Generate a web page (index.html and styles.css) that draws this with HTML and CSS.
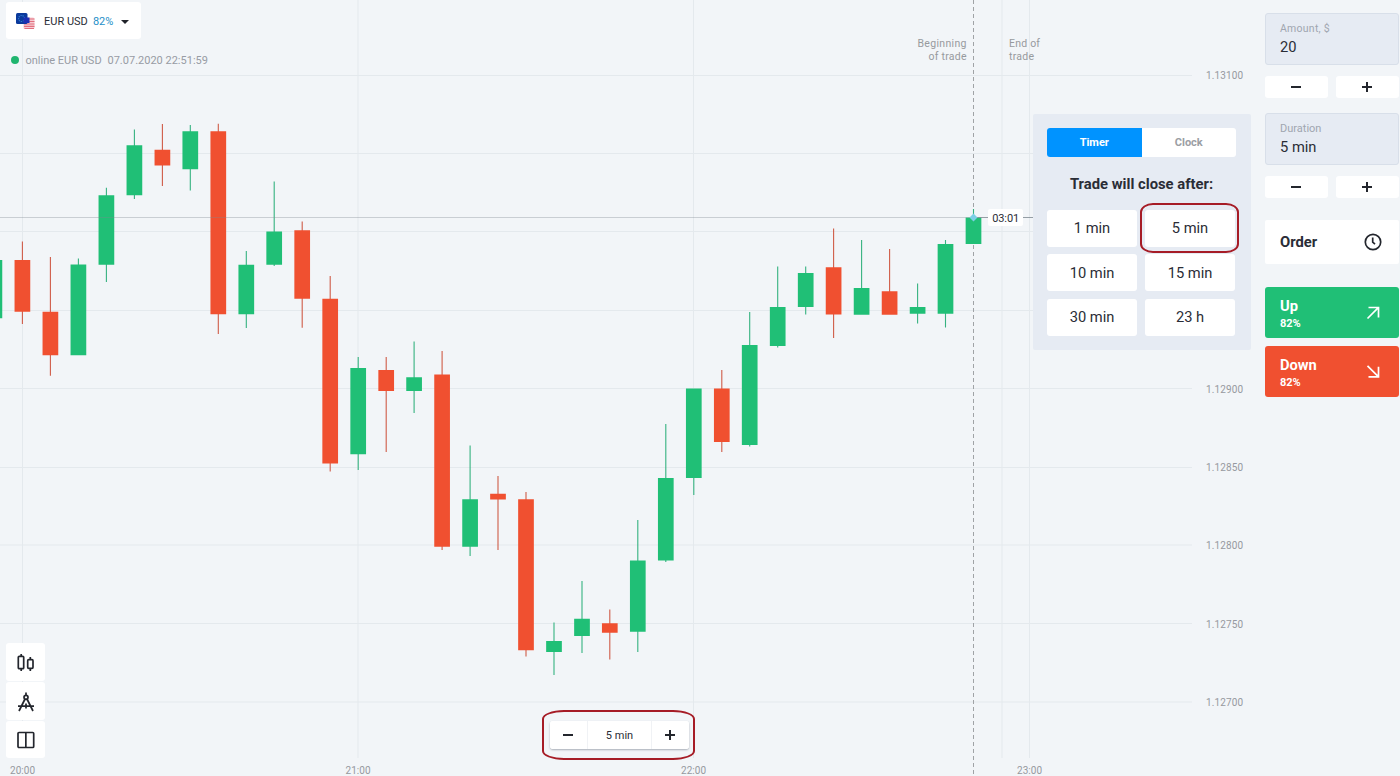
FILE: index.html
```html
<!DOCTYPE html>
<html lang="en">
<head>
<meta charset="utf-8">
<title>EUR USD</title>
<link rel="stylesheet" href="styles.css">
</head>
<body>
<div class="app">
  <main class="stage">
    <svg class="chart" viewBox="0 0 1251 776" width="1251" height="776">
      <g class="grid">
        <path d="M0 75.5H1192M0 153.5H1192M0 231.5H1192M0 310.5H1192M0 388.5H1192M0 467.5H1192M0 545H1192M0 623.5H1192M0 702H1192"/>
        <path d="M22.5 0V758M358 0V758M693.5 0V758M1002 0V758M1029.5 0V758"/>
      </g>
      <path class="begin-line" d="M973.5 0V776"/>
      <g class="up">
        <path class="wick" d="M78.4 258.5V265M106.4 187.7V282M134.4 129.5V199M190.3 125V190.5M246.3 251V328M274.2 181.5V266M358.2 357V470M414.1 341.5V413M470.1 445.5V556M554 622.5V675M582 581V653M637.8 520V652M665.8 424V562M693.8 470V495M749.7 312V446.5M777.7 266.5V347.5M805.7 266.5V314.5M861.6 240V290M917.6 283.5V323.5M945.5 240V327.5M973.5 209V220"/>
        <path class="body" d="M-5.6 260V318.3M78.4 264.5V355.3M106.4 195.3V264.7M134.4 145.2V195.3M190.3 131.3V169.3M246.3 264.7V314.3M274.2 231.5V264.7M358.2 368V454.3M414.1 377.3V391M470.1 499.3V546.7M554 641V652M582 618.7V636M637.8 560.5V631.7M665.8 478V560.5M693.8 388.5V478M749.7 345V445M777.7 307V346M805.7 273V307M861.6 288V314.7M917.6 307V313.7M945.5 244V313.7M973.5 217.5V244"/>
      </g>
      <g class="down">
        <path class="wick" d="M22.4 241.5V324M50.4 257V375.7M162.4 124V186M218.3 123.7V334M302.2 221.5V327.7M330.2 276V471.5M386.2 357V452M442.1 351V550M498 476V550M526 492V656.5M609.8 609.5V659.5M721.8 370V452M833.6 228.5V338M889.6 249V292"/>
        <path class="body" d="M22.4 260V311.7M50.4 311.7V355.3M162.4 149.8V165.5M218.3 131.3V314.3M302.2 230.3V298.7M330.2 298.7V463.5M386.2 370V391M442.1 374.5V546.7M498 493.7V499.5M526 499.3V650.3M609.8 623.3V632.7M721.8 388.5V442M833.6 267.3V314.5M889.6 291.3V314.7"/>
      </g>
      <path class="price-line" d="M0 217.5H973"/>
      <path class="price-line strong" d="M973 217.5H1033"/>
      <path class="marker" d="M973.5 213.5L977.5 217.5L973.5 221.5L969.5 217.5Z"/>
      <rect class="countdown" x="988" y="209" width="35" height="17" rx="2"/>
      <text class="countdown-text" x="1005.7" y="222" text-anchor="middle" textLength="27">03:01</text>
      <g class="label">
        <text x="966.5" y="47" text-anchor="end" textLength="49">Beginning</text>
        <text x="966.5" y="59.5" text-anchor="end" textLength="38">of trade</text>
        <text x="1009" y="47" textLength="31">End of</text>
        <text x="1009" y="59.5" textLength="25">trade</text>
      </g>
      <g class="axis">
        <text x="1206" y="79" textLength="37">1.13100</text>
        <text x="1206" y="392.5" textLength="37">1.12900</text>
        <text x="1206" y="471" textLength="37">1.12850</text>
        <text x="1206" y="549" textLength="37">1.12800</text>
        <text x="1206" y="627.5" textLength="37">1.12750</text>
        <text x="1206" y="706" textLength="37">1.12700</text>
        <g text-anchor="middle">
          <text x="22.5" y="774" textLength="25">20:00</text>
          <text x="358" y="774" textLength="25">21:00</text>
          <text x="693.5" y="774" textLength="25">22:00</text>
          <text x="1029.5" y="774" textLength="25">23:00</text>
        </g>
      </g>
    </svg>

    <header class="asset-panel">
      <div class="asset">
        <svg class="flags" width="20" height="18" viewBox="0 0 20 18">
          <rect x="7.500" y="4.500" width="11" height="11.500" rx="1.500" fill="#f6ccd3"/>
          <path d="M12 6H18.500M12 8.500H18.500M8 11H18.500M8 13.300H18.500M8.500 15.500H18" stroke="#e2707f" stroke-width="1.200"/>
          <rect x="0" y="0" width="11.500" height="11" rx="1.500" fill="#0b3a9c"/>
          <circle cx="5.600" cy="5.500" r="3" fill="none" stroke="#3079d0" stroke-width="1.100" stroke-dasharray="1.300 .8"/>
          <rect x="7.500" y="4.500" width="6" height="5.500" fill="#1c2fb4"/>
        </svg>
        <span class="pair">EUR USD</span>
        <span class="payout">82%</span>
        <i class="caret"></i>
      </div>
      <div class="status"><i class="dot"></i><span class="online">online EUR USD</span><span class="stamp">07.07.2020 22:51:59</span></div>
    </header>

    <nav class="tools">
      <button class="tool"><svg width="20" height="20" viewBox="0 0 20 20"><path d="M5.200 1V3.500M5.200 15.500V18M14.300 4V7M14.300 15V18"/><rect x="2.300" y="3.300" width="5.400" height="12.400" rx="1"/><rect x="11.700" y="6.700" width="5.300" height="8.600" rx="1"/></svg></button>
      <button class="tool"><svg width="20" height="20" viewBox="0 0 20 20"><path d="M10 .5V3.500M9 7L3 19M11 7L17 19M2 14.200H18M10 11.500V16.500"/><circle cx="10" cy="5.300" r="2"/></svg></button>
      <button class="tool"><svg width="20" height="20" viewBox="0 0 20 20"><rect x="2" y="2.500" width="15.700" height="15" rx="1"/><path d="M9.850 2.500V17.500"/></svg></button>
    </nav>

    <div class="interval">
      <button class="step"><i class="minus"></i></button>
      <span class="interval-value">5 min</span>
      <button class="step"><i class="plus"></i></button>
      <i class="ring ring-interval"></i>
    </div>

    <section class="popup">
      <div class="tabs"><span class="tab active">Timer</span><span class="tab">Clock</span></div>
      <h2 class="popup-title">Trade will close after:</h2>
      <div class="times">
        <button class="time">1 min</button>
        <button class="time">5 min<i class="ring ring-time"></i></button>
        <button class="time">10 min</button>
        <button class="time">15 min</button>
        <button class="time">30 min</button>
        <button class="time">23 h</button>
      </div>
    </section>
  </main>

  <aside class="sidebar">
    <div class="field"><span class="field-label">Amount, $</span><span class="field-value">20</span></div>
    <div class="steppers"><button class="stepper"><i class="minus"></i></button><button class="stepper"><i class="plus"></i></button></div>
    <div class="field"><span class="field-label duration">Duration</span><span class="field-value">5 min</span></div>
    <div class="steppers"><button class="stepper"><i class="minus"></i></button><button class="stepper"><i class="plus"></i></button></div>
    <button class="order"><span>Order</span><svg width="18" height="18" viewBox="0 0 18 18"><circle cx="9" cy="9" r="7.700"/><path d="M8.700 4.500V9.200L11 11.200"/></svg></button>
    <button class="trade buy"><span class="trade-text"><b>Up</b><small>82%</small></span><svg width="14" height="14" viewBox="0 0 14 14"><path d="M1.500 12.500L12.300 1.700M2.500 1.500H12.500V11.500"/></svg></button>
    <button class="trade sell"><span class="trade-text"><b>Down</b><small>82%</small></span><svg width="14" height="14" viewBox="0 0 14 14"><path d="M1.500 .8L12.300 11.600M2.500 11.800H12.500V1.800"/></svg></button>
  </aside>
</div>
</body>
</html>
```

FILE: styles.css
```css
* { box-sizing: border-box; }
body { margin: 0; background: #f2f5f8; color: #2a2d36; font-family: Roboto, sans-serif; overflow: hidden; }
button { border: 0; padding: 0; margin: 0; font: inherit; color: inherit; background: #fff; display: flex; align-items: center; justify-content: center; }
.app { display: grid; grid-template-columns: 1251px 149px; width: 1400px; height: 776px; }
.stage { position: relative; }

/* chart */
.chart { display: block; }
.grid { fill: none; stroke: #e4e9ed; stroke-width: 1; }
.begin-line { stroke: #a0a3a6; stroke-width: 1; stroke-dasharray: 4 3; }
.up { stroke: #20bf76; }
.down { stroke: #f05030; }
.wick { stroke-width: 1.1; }
.up .wick { stroke: #36b280; }
.down .wick { stroke: #cf5c48; }
.body { stroke-width: 15.7; }
.price-line { stroke: #7d8890; stroke-opacity: .35; }
.price-line.strong { stroke-opacity: .8; }
.marker { fill: #7ccfe6; }
.countdown { fill: #fff; }
.countdown-text { font-size: 11px; fill: #2a2d36; }
.label { font-size: 10.5px; fill: #979a9e; }
.axis { font-size: 10px; fill: #96999f; }

/* asset selector */
.asset-panel { position: absolute; left: 6px; top: 2px; }
.asset { display: flex; align-items: center; width: 135px; height: 37px; padding: 2px 0 0 10px; border-radius: 3px; background: #fff; font-size: 11px; }
.flags { margin-right: 8px; }
.pair { width: 44px; margin-right: 5px; white-space: nowrap; letter-spacing: 0; }
.payout { width: 21px; margin-right: 7px; color: #1e8fc8; letter-spacing: -.1px; }
.caret { border: 4.5px solid transparent; border-top-color: #20232a; border-bottom: 0; }
.status { display: flex; align-items: center; height: 14px; margin-top: 14px; padding-left: 4.5px; font-size: 11px; color: #989ca4; white-space: nowrap; }
.dot { width: 8px; height: 8px; margin-right: 7px; border-radius: 50%; background: #20b56f; }
.online { width: 77px; margin-right: 5px; }
.stamp { letter-spacing: 0; }

/* drawing tools */
.tools { position: absolute; left: 6px; top: 643px; display: flex; flex-direction: column; gap: 1px; }
.tool { width: 39px; height: 38px; padding-top: 2px; border-radius: 3px; }
.tool:last-child { height: 37px; padding-top: 1px; }
.tool svg { fill: none; stroke: #23262d; stroke-width: 1.7; }

/* step glyphs */
.minus, .plus { position: relative; display: block; width: 10px; height: 10px; margin-right: 1px; }
.minus::before, .plus::before { content: ""; position: absolute; left: 0; top: 4px; width: 10px; height: 2px; background: #23262d; }
.plus::after { content: ""; position: absolute; left: 4px; top: 0; width: 2px; height: 10px; background: #23262d; }

/* candle interval */
.interval { position: absolute; left: 550px; top: 721px; display: flex; width: 139px; height: 28px; border-radius: 3px; background: #fff; box-shadow: 0 1px 2px rgba(30, 40, 60, .35); }
.step { width: 37px; border-radius: 3px; }
.interval-value { flex: 1; display: flex; align-items: center; justify-content: center; border: solid #f0f2f5; border-width: 0 1px; font-size: 11px; }

/* highlight rings */
.ring { position: absolute; border: 2px solid #a61c26; pointer-events: none; }
.ring-interval { left: -8px; top: -11px; width: 153px; height: 50px; border-radius: 22px / 9px; }
.ring-time { left: -5px; top: -7px; width: 99px; height: 50px; border-radius: 13px / 9px; }

/* duration popup */
.popup { position: absolute; left: 1032.5px; top: 114px; width: 218px; height: 236px; padding: 14px 14.5px; border-radius: 2px; background: #e6ebf3; }
.tabs { display: flex; height: 29px; border-radius: 3px; overflow: hidden; background: #fff; font-size: 11px; font-weight: 700; color: #9b9ea4; }
.tab { flex: 1; display: flex; align-items: center; justify-content: center; }
.tab.active { background: #0093ff; color: #fff; }
.popup-title { margin: 17px 0 15.5px; height: 20px; line-height: 20px; font-size: 14.800px; font-weight: 700; text-align: center; white-space: nowrap; }
.times { display: grid; grid-template-columns: 90px 90px; grid-auto-rows: 37px; gap: 7.500px 8px; font-size: 14.700px; }
.time { position: relative; border-radius: 3px; }

/* order form */
.sidebar { display: flex; flex-direction: column; padding: 13px 1.5px 0 14px; }
.field { display: flex; flex-direction: column; height: 52px; padding: 8px 14px 0; border: 1px solid #d8dfe9; border-radius: 3px; background: #e6ebf3; }
.field-label { font-size: 10.500px; line-height: 14px; color: #a0a6b0; letter-spacing: .25px; }
.field-label.duration { font-size: 11px; letter-spacing: 0; }
.field-value { margin-top: 1px; font-size: 14.700px; line-height: 20px; }
.steppers { display: grid; grid-template-columns: 1fr 1fr; gap: 8px; height: 22px; margin: 11px 0 15px; }
.stepper { border-radius: 3px; }
.order { justify-content: space-between; height: 44px; margin-top: 7px; padding: 0 17px 0 15px; border-radius: 2px; font-size: 14.800px; font-weight: 700; }
.order svg { fill: none; stroke: #23262d; stroke-width: 1.700; }
.trade { justify-content: space-between; height: 51px; padding: 0 19px 0 15px; border-radius: 3px; color: #fff; }
.trade-text { display: flex; flex-direction: column; align-items: flex-start; padding-top: 2px; }
.trade b { font-size: 14.700px; line-height: 20px; }
.trade small { font-size: 11px; line-height: 16px; font-weight: 700; }
.trade svg { fill: none; stroke: #fff; stroke-width: 1.700; }
.buy { margin-top: 23px; background: #20bf76; }
.sell { margin-top: 8px; background: #f05030; }
```
